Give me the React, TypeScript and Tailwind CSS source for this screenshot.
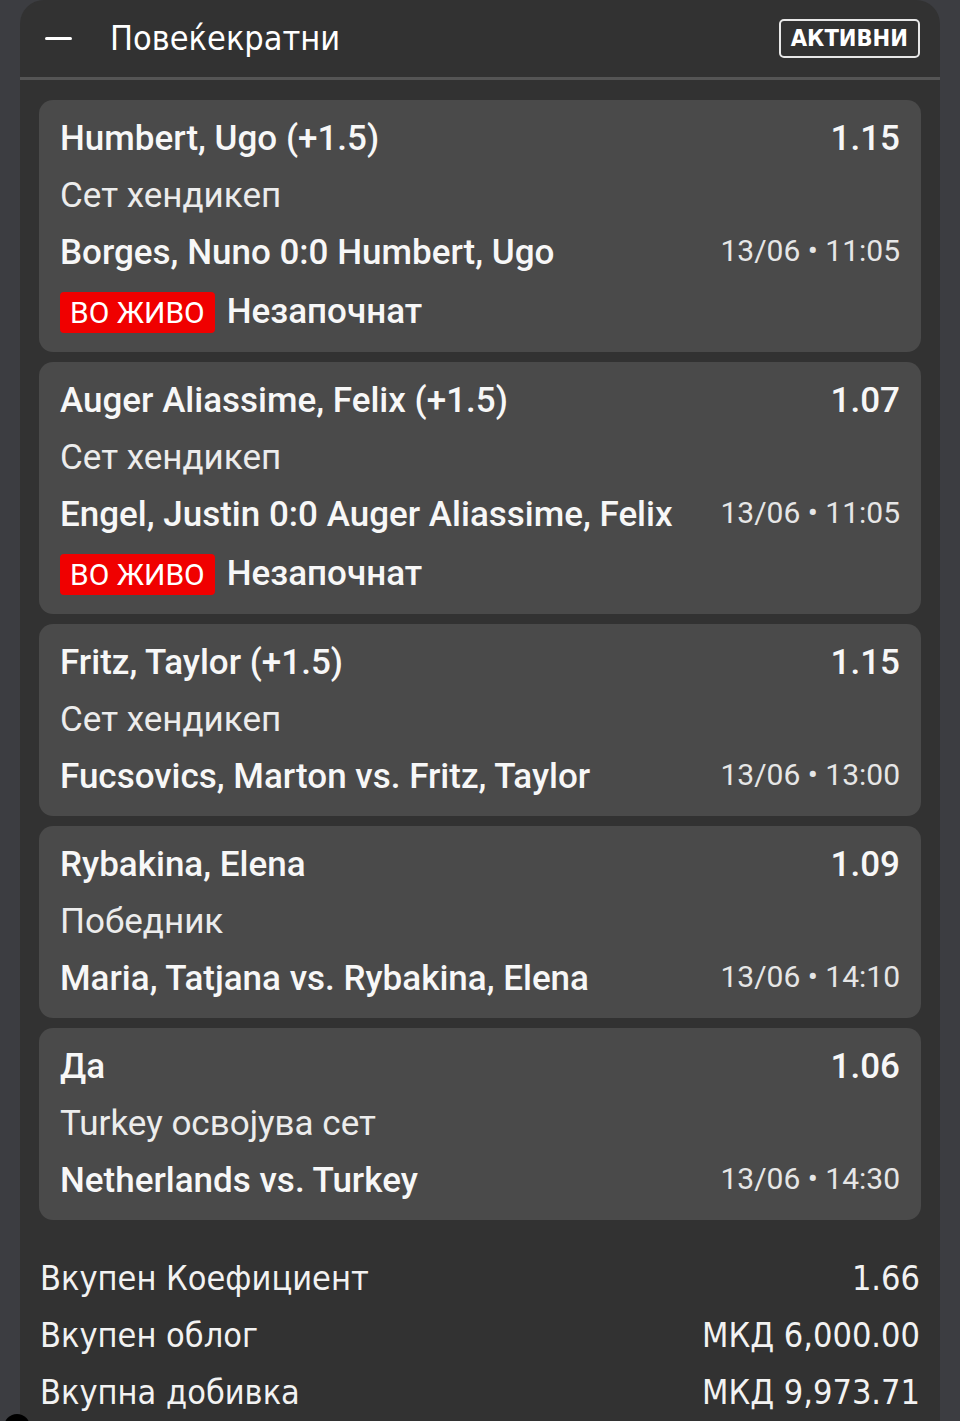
type Bet = {
  pick: string;
  odds: string;
  market: string;
  match: string;
  date: string;
  live?: boolean;
};

const bets: Bet[] = [
  {
    pick: 'Humbert, Ugo (+1.5)',
    odds: '1.15',
    market: 'Сет хендикеп',
    match: 'Borges, Nuno 0:0 Humbert, Ugo',
    date: '13/06 • 11:05',
    live: true,
  },
  {
    pick: 'Auger Aliassime, Felix (+1.5)',
    odds: '1.07',
    market: 'Сет хендикеп',
    match: 'Engel, Justin 0:0 Auger Aliassime, Felix',
    date: '13/06 • 11:05',
    live: true,
  },
  {
    pick: 'Fritz, Taylor (+1.5)',
    odds: '1.15',
    market: 'Сет хендикеп',
    match: 'Fucsovics, Marton vs. Fritz, Taylor',
    date: '13/06 • 13:00',
  },
  {
    pick: 'Rybakina, Elena',
    odds: '1.09',
    market: 'Победник',
    match: 'Maria, Tatjana vs. Rybakina, Elena',
    date: '13/06 • 14:10',
  },
  {
    pick: 'Да',
    odds: '1.06',
    market: 'Turkey освојува сет',
    match: 'Netherlands vs. Turkey',
    date: '13/06 • 14:30',
  },
];

const summary = [
  { label: 'Вкупен Коефициент', value: '1.66' },
  { label: 'Вкупен облог', value: 'МКД 6,000.00' },
  { label: 'Вкупна добивка', value: 'МКД 9,973.71' },
];

function BetCard({ bet }: { bet: Bet }) {
  return (
    <div className="rounded-[14px] bg-[#4a4a4a] px-[21px] pt-[11px] pb-[10px]">
      <div className="flex h-[57px] items-center justify-between">
        <span className="text-[35px] font-medium text-[#f7f7f7]">{bet.pick}</span>
        <span className="text-[35px] font-medium text-[#f7f7f7]">{bet.odds}</span>
      </div>
      <div className="flex h-[57px] items-center">
        <span className="text-[35px] text-[#ececec]">{bet.market}</span>
      </div>
      <div className="flex h-[57px] items-center justify-between">
        <span className="text-[35px] font-medium text-[#f7f7f7]">{bet.match}</span>
        <span className="-mt-1.5 text-[30px] text-[#e6e6e6]">{bet.date}</span>
      </div>
      {bet.live && (
        <div className="flex h-[60px] items-center gap-3">
          <span className="rounded-[4px] bg-[#f00000] px-[10px] text-[30px] leading-[41px] text-white">
            ВО ЖИВО
          </span>
          <span className="text-[35px] font-medium text-[#f7f7f7]">Незапочнат</span>
        </div>
      )}
    </div>
  );
}

export default function App() {
  return (
    <div className="relative h-[1421px] overflow-hidden bg-[#3c3d41] px-[20px] font-['Roboto',sans-serif]">
      <div className="min-h-full rounded-t-[24px] bg-[#323232]">

        {/* Header */}
        <div className="flex h-[80px] items-center justify-between border-b-[3px] border-[#555555] pl-[25px] pr-[20px]">
          <div className="flex items-center gap-[38px]">
            <div className="h-[3px] w-[27px] rounded-full bg-white" />
            <span className="font-['Liberation_Sans_Narrow','DejaVu_Sans_Condensed',Roboto,sans-serif] text-[34px] text-white">
              Повеќекратни
            </span>
          </div>
          <span className="rounded-[5px] border-2 border-[#e8e8e8] px-[10px] font-['Liberation_Sans_Narrow','DejaVu_Sans_Condensed',Roboto,sans-serif] text-[23.5px] font-bold leading-[35px] text-white">
            АКТИВНИ
          </span>
        </div>

        {/* Bets */}
        <div className="flex flex-col gap-[10px] px-[19px] pt-[20px]">
          {bets.map((bet, i) => (
            <BetCard key={i} bet={bet} />
          ))}
        </div>

        {/* Totals */}
        <div className="px-[20px] pt-[30px] font-['Liberation_Sans_Narrow','DejaVu_Sans_Condensed',Roboto,sans-serif] text-[34px] text-[#f2f2f2]">
          {summary.map((row) => (
            <div key={row.label} className="flex h-[57px] items-center justify-between">
              <span>{row.label}</span>
              <span>{row.value}</span>
            </div>
          ))}
        </div>
      </div>

      {/* floating button peeking in at the bottom edge */}
      <div className="absolute left-[4px] top-[1414px] h-[26px] w-[26px] rounded-full bg-black" />
    </div>
  );
}
